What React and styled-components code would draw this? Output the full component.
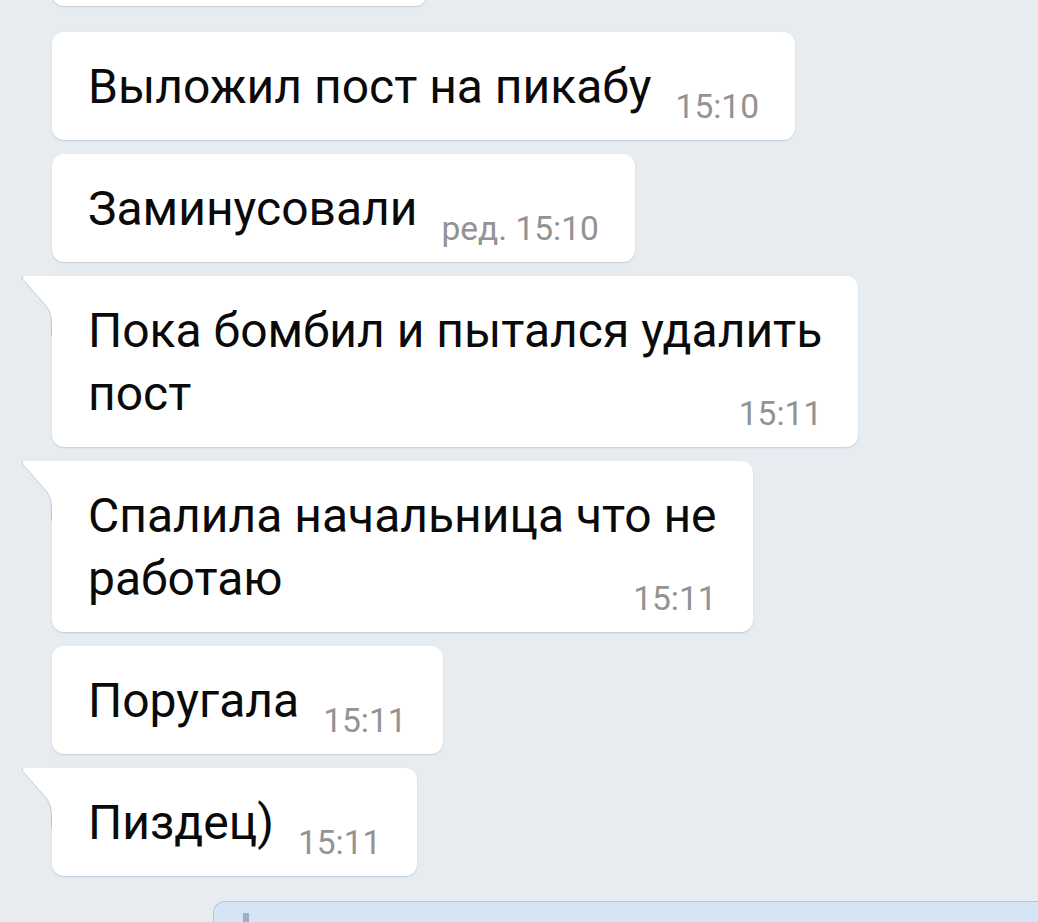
import React from "react";
import styled, { createGlobalStyle } from "styled-components";

const messages = [
  { lines: ["Выложил пост на пикабу"], time: "15:10" },
  { lines: ["Заминусовали"], time: "ред. 15:10" },
  { lines: ["Пока бомбил и пытался удалить", "пост"], time: "15:11", tail: true },
  { lines: ["Спалила начальница что не", "работаю"], time: "15:11", tail: true },
  { lines: ["Поругала"], time: "15:11" },
  { lines: ["Пиздец)"], time: "15:11", tail: true },
];

const Tail = () => (
  <TailSvg width="32" height="60" viewBox="0 0 32 60">
    <path
      d="M2.5 0 H32 V60 H30 V48 C30 38 27 32 22 27 L1 3 C0.2 1.6 1 0 2.5 0 Z"
      fill="#ffffff"
    />
  </TailSvg>
);

const App = () => {
  return (
    <>
      <GlobalStyle />
      <Screen>
        <Feed>
          {/* previous message, scrolled mostly out of view */}
          <Bubble $width="375px" />
          <Group>
            {messages.map((m, i) => (
              <Bubble key={i} $tail={m.tail}>
                {m.tail && <Tail />}
                <Text>
                  {m.lines.map((line, j) => (
                    <React.Fragment key={j}>
                      {j > 0 && <br />}
                      {line}
                    </React.Fragment>
                  ))}
                  <Time>{m.time}</Time>
                </Text>
              </Bubble>
            ))}
          </Group>
        </Feed>
        <Composer>
          <Cursor />
        </Composer>
      </Screen>
    </>
  );
};

export default App;

const GlobalStyle = createGlobalStyle`
  html, body {
    margin: 0;
    padding: 0;
    background: #e7ecf1;
    overflow: hidden;
  }
  body {
    font-family: Roboto, "Noto Sans", sans-serif;
  }
`;

const Screen = styled.div`
  width: 1038px;
  height: 922px;
  overflow: hidden;
  background: #e7ecf1;
  display: flex;
  flex-direction: column;
`;

const Feed = styled.div`
  display: flex;
  flex-direction: column;
  align-items: flex-start;
  gap: 26px;
  padding-left: 52px;
  margin-top: -102px;
`;

const Group = styled.div`
  display: flex;
  flex-direction: column;
  align-items: flex-start;
  gap: 14px;
`;

const Bubble = styled.div`
  position: relative;
  width: ${(p) => p.$width || "auto"};
  background: #ffffff;
  border-radius: 12px;
  border-top-left-radius: ${(p) => (p.$tail ? "0" : "12px")};
  box-shadow: 0 1px 1.5px rgba(70, 90, 120, 0.22);
  padding: 23px 36px 22px 36px;
  min-height: 108px;
  box-sizing: border-box;
`;

const TailSvg = styled.svg`
  position: absolute;
  left: -30px;
  top: 0;
  filter: drop-shadow(-0.5px 0.5px 0.6px rgba(70, 90, 120, 0.22));
`;

const Text = styled.div`
  font-size: 48px;
  line-height: 63px;
  color: #0a0a0a;
  white-space: nowrap;
`;

const Time = styled.span`
  float: right;
  font-size: 33.5px;
  line-height: 33.5px;
  color: #939393;
  margin: 35px 0 -10px 24px;
`;

const Composer = styled.div`
  margin: 25px 0 0 213px;
  height: 80px;
  flex-shrink: 0;
  background: #d5e5f6;
  border: 1px solid #b6c5d6;
  border-right: none;
  border-radius: 12px 0 0 0;
`;

const Cursor = styled.div`
  margin: 11px 0 0 29px;
  width: 6px;
  height: 40px;
  background: #9cafc9;
`;
